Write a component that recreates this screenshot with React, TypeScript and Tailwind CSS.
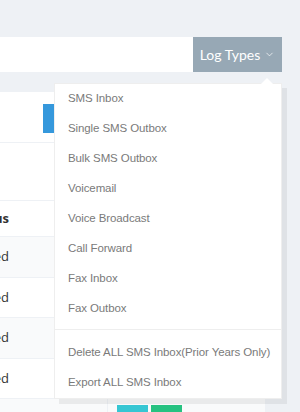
import { ChevronDown } from "lucide-react";

const items = [
  "SMS Inbox",
  "Single SMS Outbox",
  "Bulk SMS Outbox",
  "Voicemail",
  "Voice Broadcast",
  "Call Forward",
  "Fax Inbox",
  "Fax Outbox",
];

const extra = ["Delete ALL SMS Inbox(Prior Years Only)", "Export ALL SMS Inbox"];

const rows = [
  { h: "h-[41px]", bg: "bg-[#f9fafb]" },
  { h: "h-[40px]", bg: "bg-white" },
  { h: "h-[41px]", bg: "bg-[#f9fafb]" },
  { h: "h-[40px]", bg: "bg-white" },
];

// text of the first column is cut by the left edge, so it is right-aligned to x=9
function Cell({ text, bold }: { text: string; bold?: boolean }) {
  return (
    <div className="flex w-[107px] shrink-0">
      <div className="flex w-[9px] justify-end whitespace-nowrap">
        <span className={bold ? "font-bold" : ""}>{text}</span>
      </div>
    </div>
  );
}

export default function App() {
  return (
    <div className="relative w-[300px] h-[412px] overflow-hidden bg-[#eef1f5] pt-[37px] font-['Open_Sans',sans-serif]">
      {/* search bar + log types button */}
      <div className="flex h-[35px] w-[282px]">
        <div className="flex-1 bg-white" />
        <button className="flex w-[89px] items-center justify-center gap-1 bg-[#97a8b5] text-[14px] text-white font-['Lato',sans-serif]">
          Log Types
          <ChevronDown size={11} strokeWidth={1.5} />
        </button>
      </div>

      {/* panel with table */}
      <div className="mt-[20px] w-[265px] bg-white text-[13px] text-[#333]">
        <div className="h-[51px] border-b border-[#eef1f5] pl-[43px] pt-[12px]">
          <div className="h-[29px] w-[60px] bg-[#3598dc]" />
        </div>
        <div className="h-[58px] border-b border-[#eef1f5]" />
        <div className="flex h-[35px] items-center">
          <Cell text="Status" bold />
        </div>
        {rows.map((r, i) => (
          <div key={i} className={`flex ${r.h} items-center border-t border-[#eef1f5] ${r.bg}`}>
            <Cell text="Received" />
          </div>
        ))}
        <div className="flex h-[40px] border-t border-[#eef1f5] bg-[#f9fafb]">
          <div className="border-r border-[#eef1f5] pt-[9px]">
            <Cell text="Received" />
          </div>
          <div className="flex gap-[3px] pl-[9px] pt-[6px]">
            <div className="h-[24px] w-[31px] bg-[#36c6d3]" />
            <div className="h-[24px] w-[31px] bg-[#26c281]" />
          </div>
        </div>
      </div>

      {/* dropdown menu */}
      <div className="absolute left-[54px] top-[83px] w-[228px] border border-[#eee] bg-white shadow-[5px_5px_rgba(102,102,102,0.1)] font-['Liberation_Sans',Arial,sans-serif] text-[11.5px] tracking-[-0.1px] text-[#7a7a7a]">
        <div className="absolute -top-[6px] right-[8px] h-0 w-0 border-x-[6px] border-b-[6px] border-x-transparent border-b-white" />
        {items.map((t) => (
          <div key={t} className="flex h-[30px] items-center whitespace-nowrap px-[13px]">
            {t}
          </div>
        ))}
        <div className="mb-[8px] mt-[5px] h-px bg-[#eee]" />
        {extra.map((t) => (
          <div key={t} className="flex h-[30px] items-center whitespace-nowrap px-[13px]">
            {t}
          </div>
        ))}
      </div>
    </div>
  );
}
